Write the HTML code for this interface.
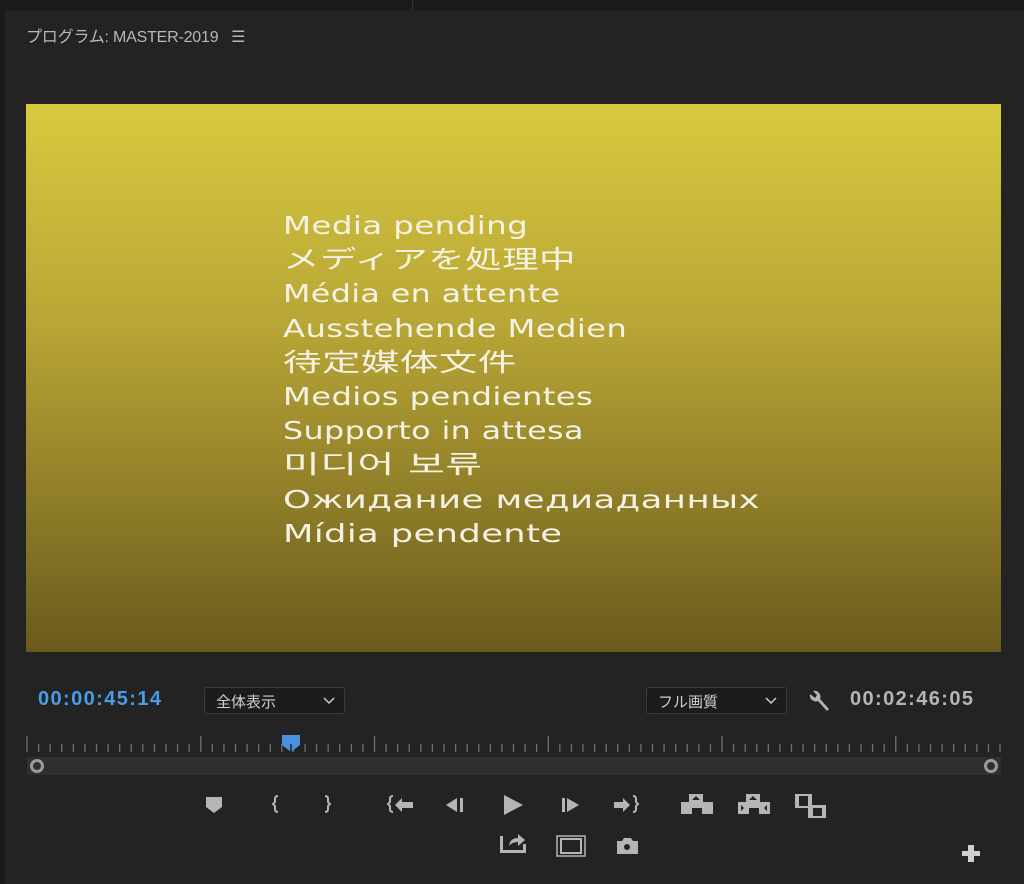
<!DOCTYPE html>
<html><head><meta charset="utf-8"><style>
*{margin:0;padding:0;box-sizing:border-box}
body{width:1024px;height:884px;background:#232323;position:relative;overflow:hidden;font-family:"Liberation Sans","Noto Sans CJK JP",sans-serif}
.top{position:absolute;left:0;top:0;width:1024px;height:11px;background:#1a1a1a}
.lb{position:absolute;left:0;top:0;width:5px;height:884px;background:#1a1a1a}
.title{position:absolute;left:26px;top:23px;font-size:16px;color:#b8b8b8;letter-spacing:-0.2px}
.video{position:absolute;left:26px;top:104px;width:975px;height:548px;background:linear-gradient(#d8c93e,#b8a636 40%,#6b5a1c)}
.txt{position:absolute;left:283px;top:209px;color:#f4f2e4;font-size:25px;line-height:34.2px;font-family:"DejaVu Sans","Noto Sans CJK JP",sans-serif;letter-spacing:0.3px}
.txt div{transform-origin:0 50%;white-space:nowrap}
.tc{position:absolute;top:688px;font-size:20px;font-weight:bold;letter-spacing:1.4px}
.dd{position:absolute;top:687px;height:27px;border:1px solid #3a3a3a;border-radius:3px;background:#1c1c1c;color:#cfcfcf;font-size:15px;padding:3px 0 0 11px}
.dd svg{position:absolute;right:9px;top:9px}
.track{position:absolute;left:27px;top:757px;width:974px;height:18px;background:#2f2f2f}
.c{position:absolute;width:14px;height:14px;border:3px solid #9a9a9a;border-radius:50%;top:759px}
</style></head><body>
<div class="top"></div><div class="lb"></div>
<div style="position:absolute;left:412px;top:0;width:1px;height:11px;background:#333"></div>
<div class="title">プログラム: MASTER-2019 &nbsp;&nbsp;☰</div>
<div class="video"></div>
<div class="txt">
<div style="transform:scaleX(1.30)">Media pending</div>
<div style="transform:scaleX(1.46)">メディアを処理中</div>
<div style="transform:scaleX(1.27)">Média en attente</div>
<div style="transform:scaleX(1.29)">Ausstehende Medien</div>
<div style="transform:scaleX(1.54)">待定媒体文件</div>
<div style="transform:scaleX(1.29)">Medios pendientes</div>
<div style="transform:scaleX(1.27)">Supporto in attesa</div>
<div style="transform:scaleX(1.6)">미디어 보류</div>
<div style="transform:scaleX(1.42)">Ожидание медиаданных</div>
<div style="transform:scaleX(1.41)">Mídia pendente</div>
</div>
<div class="tc" style="left:38px;color:#4b9be8">00:00:45:14</div>
<div class="dd" style="left:204px;width:141px">全体表示<svg width="12" height="8"><path d="M1 1l5 5 5-5" stroke="#ccc" stroke-width="1.5" fill="none"/></svg></div>
<div class="dd" style="left:646px;width:141px">フル画質<svg width="12" height="8"><path d="M1 1l5 5 5-5" stroke="#ccc" stroke-width="1.5" fill="none"/></svg></div>
<svg style="position:absolute;left:806px;top:688px" width="26" height="26" viewBox="0 0 26 26"><path d="M4 6a6 6 0 0 0 8 7l9 10 2-2-9-10a6 6 0 0 0-7-8l4 4-2 3z" fill="#b5b5b5"/></svg>
<div class="tc" style="left:850px;color:#b5b5b5">00:02:46:05</div>
<svg style="position:absolute;left:0;top:730px" width="1024" height="30">
<g stroke="#707070" stroke-width="1.3" id="t"></g>
<path d="M282 5h18v10l-9 7-9-7z" fill="#4b8fe0"/><path d="M291 14v8" stroke="#222" stroke-width="1.5"/>
</svg>
<div class="track"></div>
<div class="c" style="left:30px"></div><div class="c" style="left:984px"></div>
<svg style="position:absolute;left:0;top:780px" width="1024" height="104" fill="#b5b5b5">
<path d="M206 17h16v10l-8 6-8-6z"/>
<path d="M278 16q-3 0-3 3v3l-2 2 2 2v3q0 3 3 3" stroke="#b5b5b5" stroke-width="2" fill="none"/>
<path d="M325 16q3 0 3 3v3l2 2-2 2v3q0 3-3 3" stroke="#b5b5b5" stroke-width="2" fill="none"/>
<path d="M393 16q-3 0-3 3v3l-2 2 2 2v3q0 3 3 3" stroke="#b5b5b5" stroke-width="2" fill="none"/><path d="M395 25l7-7v4h11v6h-11v4z"/>
<path d="M446 25l11-7v14z"/><rect x="460" y="18" width="3" height="14"/>
<path d="M504 15l19 10-19 10z"/>
<rect x="562" y="18" width="3" height="14"/><path d="M567 18l12 7-12 7z"/>
<path d="M614 22h9v-4l7 7-7 7v-4h-9z"/><path d="M633 16q3 0 3 3v3l2 2-2 2v3q0 3-3 3" stroke="#b5b5b5" stroke-width="2" fill="none"/>
<path d="M681 22h8v-8h14v8h10v12h-11v-6h-10v6h-11z"/><path d="M692 20l4-4 4 4z" fill="#232323"/>
<path d="M738 22h8v-8h14v8h10v12h-11v-6h-10v6h-11z"/><path d="M749 20l4-4 4 4zM741 25v6l3-3zM767 25v6l-3-3z" fill="#232323"/>
<rect x="795" y="14" width="17" height="14"/><rect x="808" y="25" width="18" height="13"/><rect x="799" y="16" width="9" height="10" fill="#232323"/><rect x="813" y="28" width="9" height="8" fill="#232323"/>
<path d="M500 56v17h26v-9h-3v6h-20v-14z"/><path d="M509 66q1-8 9-8v-4l7 6-7 6v-4q-6 0-9 4z"/>
<rect x="557" y="56" width="28" height="20" fill="none" stroke="#b5b5b5" stroke-width="1.5"/><rect x="561" y="59" width="20" height="14" fill="none" stroke="#b5b5b5" stroke-width="2"/>
<path d="M617 61h5l2-3h7l2 3h5v13h-21z"/><circle cx="627" cy="67" r="3" fill="#232323"/>
<path d="M968 65h6v6h6v5h-6v6h-6v-6h-6v-5h6z" fill="#d0d0d0"/>
</svg>
<script>
var g=document.getElementById('t'),s='';
for(var i=0;i<=84;i++){var x=27+i*973/84;var maj=i%15==0;s+='<line x1="'+x+'" x2="'+x+'" y1="'+(maj?6:14)+'" y2="22"/>';}
g.innerHTML=s;
</script>
</body></html>
